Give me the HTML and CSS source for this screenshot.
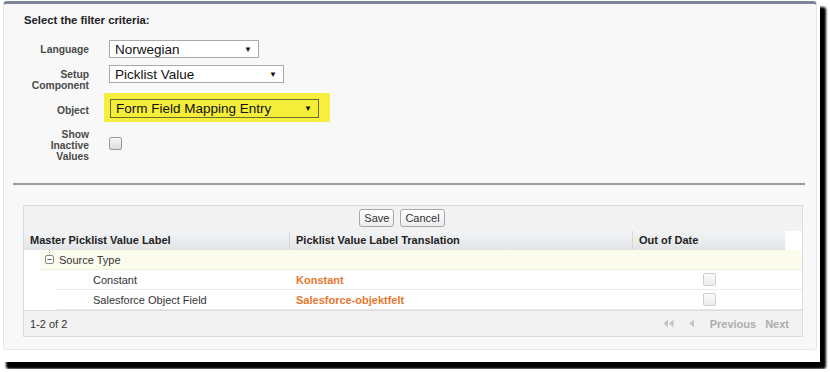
FILE: index.html
```html
<!DOCTYPE html>
<html>
<head>
<meta charset="utf-8"/>
<title>Translate</title>
<link rel="stylesheet" href="styles.css">
</head>
<body>
<div class="stack">
<div class="shade"></div>
<div class="frame">
<div class="panel">
<div class="title">Select the filter criteria:</div>
<div class="form">
<div class="row r-lang">
<div class="lbl">Language</div>
<div class="sel w-lang"><span>Norwegian</span><i>▼</i></div>
</div>
<div class="row r-comp">
<div class="lbl">Setup<br>Component</div>
<div class="sel w-comp"><span>Picklist Value</span><i>▼</i></div>
</div>
<div class="row r-obj">
<div class="lbl">Object</div>
<div class="mark">
<div class="sel w-obj"><span>Form Field Mapping Entry</span><i>▼</i></div>
</div>
</div>
<div class="row r-show">
<div class="lbl">Show<br>Inactive<br>Values</div>
<div class="chk"></div>
</div>
</div>
<div class="sep"></div>
<div class="list">
<div class="btns">
<div class="btn">Save</div>
<div class="btn">Cancel</div>
</div>
<div class="head">
<div class="hc">Master Picklist Value Label</div>
<div class="hc">Picklist Value Label Translation</div>
<div class="hc">Out of Date</div>
</div>
<div class="rows">
<div class="grp">
<svg class="tree" width="12" height="16" viewBox="0 0 12 16">
<path d="M5.5 0v5" stroke="#999" stroke-dasharray="1 1"/>
<rect x="1.5" y="5.5" width="8" height="8" rx="1.5" fill="#fff" stroke="#8a8a8a"/>
<path d="M3.5 9.5h4" stroke="#555"/>
<path d="M9.5 9.5h2" stroke="#999" stroke-dasharray="1 1"/>
</svg>
<span>Source Type</span>
</div>
<div class="item">
<div class="c1">Constant</div>
<div class="c2">Konstant</div>
<div class="c3"><div class="chk off"></div></div>
</div>
<div class="item">
<div class="c1">Salesforce Object Field</div>
<div class="c2">Salesforce-objektfelt</div>
<div class="c3"><div class="chk off"></div></div>
</div>
</div>
<div class="foot">
<div class="count">1-2 of 2</div>
<div class="pager">
<svg width="11" height="9" viewBox="0 0 11 9"><path d="M5 0.5v8L0.5 4.5z M10.5 0.5v8L6 4.5z" fill="#c4c4c4"/></svg>
<svg class="prev-ic" width="6" height="9" viewBox="0 0 6 9"><path d="M5 0.5v8L0.5 4.5z" fill="#c4c4c4"/></svg>
<span>Previous</span>
<span>Next</span>
</div>
</div>
</div>
</div>
</div>
</div>
</body>
</html>
```

FILE: styles.css
```css
body {
margin: 0;
background-color: #fff;
font-family: "Liberation Sans", Arial, sans-serif;
color: #222;
}
.stack {
display: grid;
width: 828px;
}
.shade {
grid-area: 1 / 1;
z-index: 0;
width: 820px;
height: 362px;
margin: 7px 0 0 6px;
background-color: #000;
border-radius: 3px;
filter: blur(1px);
}
.frame {
grid-area: 1 / 1;
z-index: 1;
width: 820px;
height: 362px;
box-sizing: border-box;
padding: 1px 3px 12px 3px;
background-color: #fff;
}
.panel {
height: 100%;
box-sizing: border-box;
background-color: #f8f8f8;
border: 1px solid #e6e6e6;
border-top: 3px solid #7c8698;
border-radius: 4px;
}
.title {
padding: 9px 0 0 20px;
font-size: 11.3px;
line-height: 14px;
font-weight: bold;
color: #222;
}
.form {
margin-top: 13px;
}
.row {
display: flex;
}
.lbl {
width: 85px;
margin-right: 20px;
text-align: right;
font-size: 10.3px;
line-height: 11px;
font-weight: bold;
color: #4a4a4a;
}
.r-lang {
align-items: center;
height: 18px;
}
.r-comp {
margin-top: 7px;
height: 26px;
}
.r-comp .lbl {
padding-top: 4px;
}
.r-obj {
margin-top: 2px;
align-items: center;
}
.r-obj .lbl {
padding-top: 5px;
}
.r-show {
margin-top: 7px;
}
.r-show .chk {
margin-top: 8px;
}
.sel {
display: flex;
align-items: center;
justify-content: space-between;
box-sizing: border-box;
height: 18px;
padding: 0 6px 0 5px;
background-color: #fff;
border: 1px solid #aaa;
font-size: 13.5px;
color: #111;
}
.sel i {
font-style: normal;
font-size: 8px;
}
.w-lang {
width: 150px;
}
.w-comp {
width: 175px;
}
.mark {
margin-left: -5px;
padding: 6px 11px 4px 6px;
background-color: #f6ef3f;
}
.w-obj {
width: 209px;
height: 19px;
background-color: #f4ed3a;
border-color: #6b6a2a;
}
.chk {
width: 11px;
height: 11px;
border: 1px solid #9a9a9a;
border-radius: 2px;
background: linear-gradient(#f4f4f4, #dcdcdc);
}
.chk.off {
border-color: #cfcfcf;
background: linear-gradient(#fbfbfb, #ececec);
}
.sep {
margin: 21px 11px 0 9px;
height: 2px;
background-color: #9b9b9b;
}
.list {
margin: 20px 13px 0 19px;
border: 1px solid #dcdcdc;
background-color: #f2f2f2;
}
.btns {
display: flex;
justify-content: center;
gap: 6px;
padding: 3px 22px 4px 0;
}
.btn {
box-sizing: border-box;
height: 18px;
padding: 0 4px;
border: 1px solid #a8a8a8;
border-radius: 3px;
background: linear-gradient(#ffffff, #ededed);
font-size: 11px;
line-height: 16px;
color: #333;
}
.head {
display: flex;
background-color: #fff;
}
.hc {
box-sizing: border-box;
height: 19px;
padding-left: 6px;
border-right: 1px solid #d4d6d9;
background: linear-gradient(#f3f4f5, #e2e4e6);
font-size: 11px;
line-height: 19px;
font-weight: bold;
color: #222;
}
.hc:nth-child(1) {
width: 266px;
}
.hc:nth-child(2) {
width: 343px;
}
.hc:nth-child(3) {
width: 152px;
border-right: 0;
}
.rows {
background-color: #fff;
border-bottom: 1px solid #dcdcdc;
}
.grp {
display: flex;
align-items: center;
height: 19px;
margin-left: 16px;
background-color: #fcfcee;
border-bottom: 1px solid #eeeedd;
font-size: 11px;
color: #333;
}
.tree {
margin: -4px 3px 0 4px;
}
.item {
display: flex;
align-items: center;
height: 19px;
margin-left: 33px;
border-bottom: 1px solid #e8e8e8;
font-size: 11px;
}
.c1 {
width: 233px;
box-sizing: border-box;
padding-left: 36px;
color: #333;
}
.c2 {
width: 343px;
box-sizing: border-box;
padding-left: 6px;
font-weight: bold;
color: #e8762d;
}
.c3 {
display: flex;
justify-content: center;
width: 152px;
}
.foot {
display: flex;
align-items: center;
justify-content: space-between;
height: 25px;
padding: 0 13px 0 6px;
font-size: 11px;
color: #333;
}
.pager {
display: flex;
align-items: center;
font-weight: bold;
color: #adadad;
}
.prev-ic {
margin: 0 15px 0 15px;
}
.pager span + span {
margin-left: 9px;
}
```
